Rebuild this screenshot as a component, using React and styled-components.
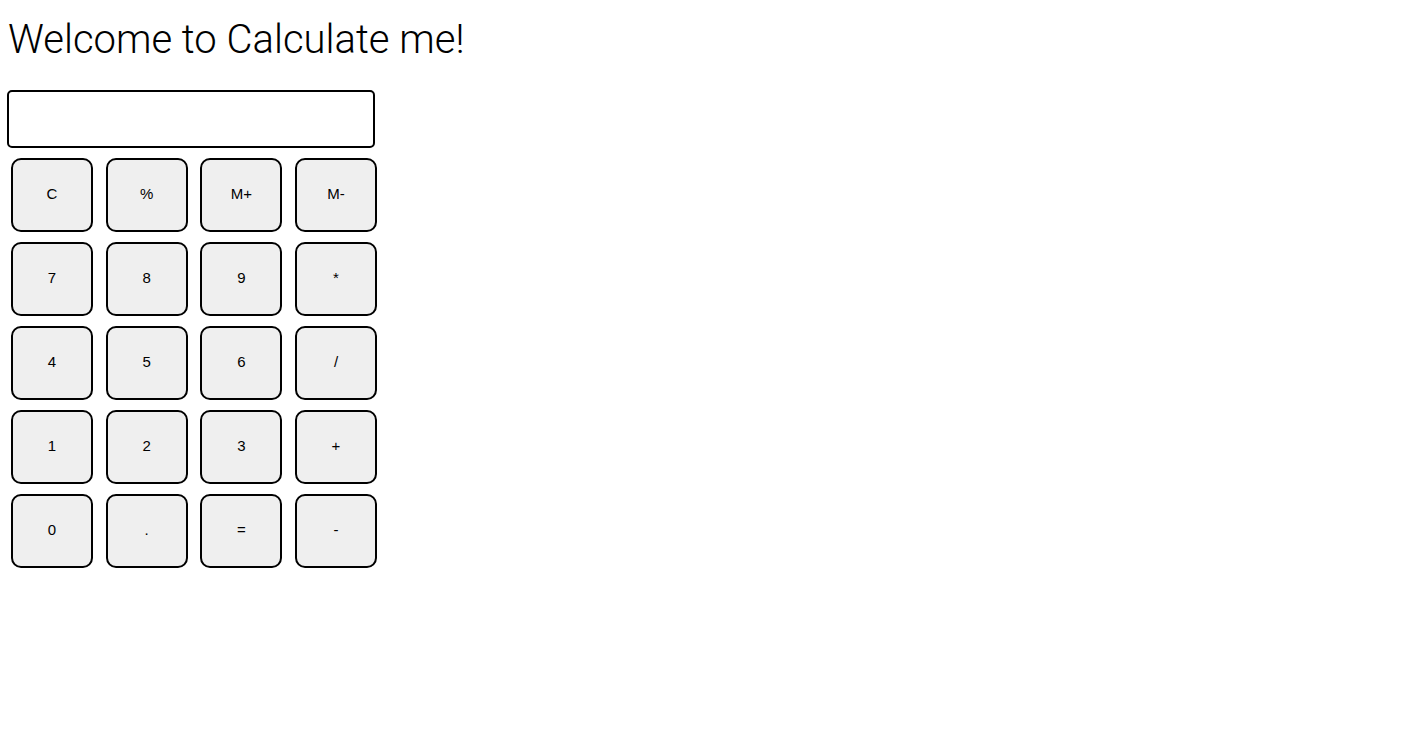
import styled, { createGlobalStyle } from 'styled-components';

const GlobalStyle = createGlobalStyle`
  body {
    margin: 0;
    background: #fff;
  }
`;

const Page = styled.div`
  padding: 0 7px;
`;

const Title = styled.h1`
  margin: 14px 0 24px 1px;
  font-family: Roboto, 'Liberation Sans', sans-serif;
  font-weight: 300;
  font-size: 40px;
  line-height: 52px;
  color: #000;
`;

const Display = styled.input`
  display: block;
  box-sizing: border-box;
  width: 368px;
  height: 58px;
  margin: 0;
  padding: 0 10px;
  border: 2px solid #000;
  border-radius: 5px;
  background: #fff;
  font-family: 'Liberation Sans', Arial, sans-serif;
  font-size: 24px;
  outline: none;
`;

const Keypad = styled.div`
  display: grid;
  grid-template-columns: repeat(4, 82px);
  column-gap: 12.67px;
  row-gap: 10px;
  margin: 10px 0 0 4px;
`;

const Key = styled.button`
  box-sizing: border-box;
  width: 82px;
  height: 74px;
  padding: 0 0 4px;
  border: 2px solid #000;
  border-radius: 10px;
  background: #efefef;
  color: #000;
  font-family: 'Liberation Sans', Arial, sans-serif;
  font-size: 15px;
  cursor: pointer;
`;

const keys = ['C', '%', 'M+', 'M-', '7', '8', '9', '*', '4', '5', '6', '/', '1', '2', '3', '+', '0', '.', '=', '-'];

const App = () => (
  <Page>
    <GlobalStyle />
    <Title>Welcome to Calculate me!</Title>
    <Display type='text' />
    <Keypad>
      {keys.map(k => (
        <Key key={k}>{k}</Key>
      ))}
    </Keypad>
  </Page>
);

export default App;
